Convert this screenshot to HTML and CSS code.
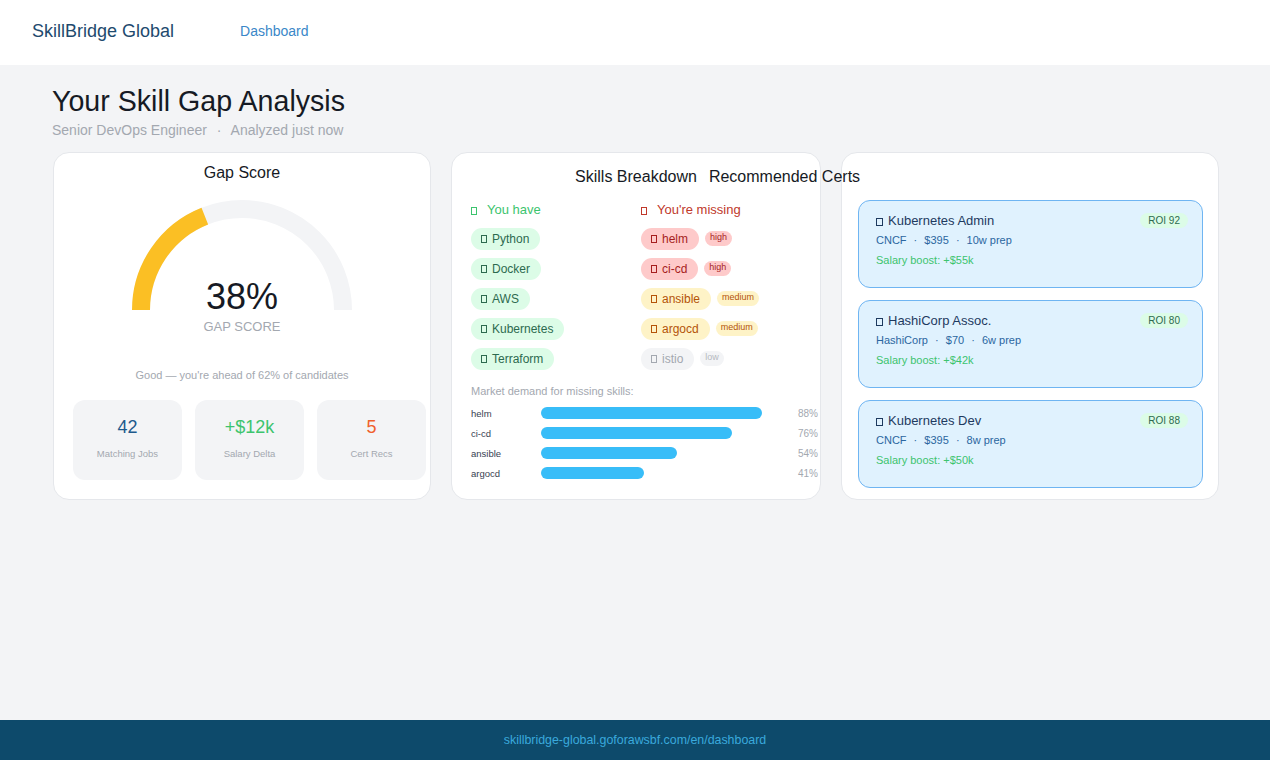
FILE: index.html
```html
<!DOCTYPE html>
<html lang="en">
<head>
  <meta charset="UTF-8">
  <meta name="viewport" content="width=device-width, initial-scale=1.0">
  <title>SkillBridge Global – Dashboard</title>
  <link rel="stylesheet" href="styles.css">
</head>
<body>

<header class="topbar">
  <div class="logo">SkillBridge Global</div>
  <nav class="nav">
    <a href="#" class="nav-link">Dashboard</a>
  </nav>
</header>

<main class="main">
  <h1 class="page-title">Your Skill Gap Analysis</h1>
  <p class="page-sub">Senior DevOps Engineer <span class="dot">·</span> Analyzed just now</p>

  <div class="cards">

    <!-- Gap score -->
    <section class="card">
      <h3 class="card-title">Gap Score</h3>
      <div class="gauge">
        <svg width="240" height="120" viewBox="0 0 240 120">
          <path d="M 19 111 A 101 101 0 0 1 221 111" fill="none" stroke="#f3f4f6" stroke-width="18"/>
          <path d="M 19 111 A 101 101 0 0 1 82.83 17.09" fill="none" stroke="#fbbf24" stroke-width="18"/>
        </svg>
        <div class="gauge-text">
          <div class="gauge-value">38%</div>
          <div class="gauge-label">GAP SCORE</div>
        </div>
      </div>
      <p class="gauge-note">Good — you're ahead of 62% of candidates</p>
      <div class="stats">
        <div class="stat">
          <div class="stat-value blue">42</div>
          <div class="stat-label">Matching Jobs</div>
        </div>
        <div class="stat">
          <div class="stat-value green">+$12k</div>
          <div class="stat-label">Salary Delta</div>
        </div>
        <div class="stat">
          <div class="stat-value orange">5</div>
          <div class="stat-label">Cert Recs</div>
        </div>
      </div>
    </section>

    <!-- Skills breakdown -->
    <section class="card skills-card">
      <h3 class="card-title skills-title"><span class="title-wrap">Skills Breakdown<span class="title-extra">Recommended Certs</span></span></h3>
      <div class="skills">
        <div class="skill-col">
          <div class="col-head have"><span class="tofu"></span>You have</div>
          <div class="skill-row"><span class="pill pill-have"><span class="tofu"></span>Python</span></div>
          <div class="skill-row"><span class="pill pill-have"><span class="tofu"></span>Docker</span></div>
          <div class="skill-row"><span class="pill pill-have"><span class="tofu"></span>AWS</span></div>
          <div class="skill-row"><span class="pill pill-have"><span class="tofu"></span>Kubernetes</span></div>
          <div class="skill-row"><span class="pill pill-have"><span class="tofu"></span>Terraform</span></div>
        </div>
        <div class="skill-col">
          <div class="col-head missing"><span class="tofu"></span>You're missing</div>
          <div class="skill-row"><span class="pill pill-high"><span class="tofu"></span>helm</span><span class="tag tag-high">high</span></div>
          <div class="skill-row"><span class="pill pill-high"><span class="tofu"></span>ci-cd</span><span class="tag tag-high">high</span></div>
          <div class="skill-row"><span class="pill pill-medium"><span class="tofu"></span>ansible</span><span class="tag tag-medium">medium</span></div>
          <div class="skill-row"><span class="pill pill-medium"><span class="tofu"></span>argocd</span><span class="tag tag-medium">medium</span></div>
          <div class="skill-row"><span class="pill pill-low"><span class="tofu"></span>istio</span><span class="tag tag-low">low</span></div>
        </div>
      </div>

      <p class="demand-label">Market demand for missing skills:</p>
      <div class="demand">
        <div class="demand-row">
          <span class="demand-name">helm</span>
          <span class="demand-track"><span class="demand-bar" style="width: 88%"></span></span>
          <span class="demand-pct">88%</span>
        </div>
        <div class="demand-row">
          <span class="demand-name">ci-cd</span>
          <span class="demand-track"><span class="demand-bar" style="width: 76%"></span></span>
          <span class="demand-pct">76%</span>
        </div>
        <div class="demand-row">
          <span class="demand-name">ansible</span>
          <span class="demand-track"><span class="demand-bar" style="width: 54%"></span></span>
          <span class="demand-pct">54%</span>
        </div>
        <div class="demand-row">
          <span class="demand-name">argocd</span>
          <span class="demand-track"><span class="demand-bar" style="width: 41%"></span></span>
          <span class="demand-pct">41%</span>
        </div>
      </div>
    </section>

    <!-- Recommended certs -->
    <section class="card certs-card">
      <div class="cert-list">
        <div class="cert">
          <div class="cert-head">
            <span class="cert-name"><span class="tofu"></span>Kubernetes Admin</span>
            <span class="roi">ROI 92</span>
          </div>
          <div class="cert-meta">CNCF <span class="sep">·</span> $395 <span class="sep">·</span> 10w prep</div>
          <div class="cert-boost">Salary boost: +$55k</div>
        </div>
        <div class="cert">
          <div class="cert-head">
            <span class="cert-name"><span class="tofu"></span>HashiCorp Assoc.</span>
            <span class="roi">ROI 80</span>
          </div>
          <div class="cert-meta">HashiCorp <span class="sep">·</span> $70 <span class="sep">·</span> 6w prep</div>
          <div class="cert-boost">Salary boost: +$42k</div>
        </div>
        <div class="cert">
          <div class="cert-head">
            <span class="cert-name"><span class="tofu"></span>Kubernetes Dev</span>
            <span class="roi">ROI 88</span>
          </div>
          <div class="cert-meta">CNCF <span class="sep">·</span> $395 <span class="sep">·</span> 8w prep</div>
          <div class="cert-boost">Salary boost: +$50k</div>
        </div>
      </div>
    </section>

  </div>
</main>

<footer class="footer">skillbridge-global.goforawsbf.com/en/dashboard</footer>

</body>
</html>
```

FILE: styles.css
```css
* { box-sizing: border-box; }

body {
  margin: 0;
  min-height: 100vh;
  display: flex;
  flex-direction: column;
  font-family: "Liberation Sans", Arial, sans-serif;
  background: #f3f4f6;
  color: #111827;
}

/* top bar */
.topbar {
  height: 65px;
  background: #fff;
  display: flex;
  align-items: center;
  padding: 0 32px;
}
.logo {
  font-size: 18px;
  color: #1e4a6e;
  margin-top: -3px;
}
.nav { margin-left: 66px; margin-top: -3px; }
.nav-link {
  font-size: 14px;
  color: #3a87c8;
  text-decoration: none;
}

/* page */
.main {
  flex: 1;
  padding: 19px 52px;
}
.page-title {
  margin: 0;
  font-size: 28.6px;
  font-weight: normal;
  line-height: 34px;
  color: #161a24;
}
.page-sub {
  margin: 2px 0 0;
  font-size: 14px;
  line-height: 20px;
  color: #a3a8b0;
}
.page-sub .dot { margin: 0 6px; }

.cards {
  margin-top: 12px;
  display: grid;
  grid-template-columns: 378px 370px 378px;
  gap: 20px;
  padding-left: 1px;
}
.card {
  background: #fff;
  border: 1px solid #e5e7eb;
  border-radius: 16px;
  padding: 9px 19px 19px;
  min-width: 0;
}
.card-title {
  margin: 0;
  font-size: 16px;
  font-weight: normal;
  line-height: 22px;
  text-align: center;
  color: #161a24;
}
.skills-card { padding-bottom: 16px; }
.skills-title { padding-top: 4px; }
.title-wrap {
  display: inline-block;
  position: relative;
  z-index: 1;
  white-space: nowrap;
}
.title-extra {
  position: absolute;
  left: calc(100% + 12px);
  top: 0;
}

/* missing-glyph box */
.tofu {
  display: inline-block;
  width: 6px;
  height: 8px;
  border: 1px solid currentColor;
  margin-right: 5px;
  vertical-align: -1px;
}

/* gauge */
.gauge {
  position: relative;
  width: 240px;
  height: 140px;
  margin: 15px auto 0;
}
.gauge svg { display: block; }
.gauge-text {
  position: absolute;
  left: 0;
  right: 0;
  top: 80px;
  text-align: center;
}
.gauge-value {
  font-size: 36px;
  line-height: 36px;
  color: #161a24;
}
.gauge-label {
  margin-top: 4px;
  font-size: 13px;
  line-height: 16px;
  color: #a3a8b0;
}
.gauge-note {
  margin: 28px 0 0;
  text-align: center;
  font-size: 11px;
  line-height: 16px;
  color: #a3a8b0;
}

.stats {
  margin-top: 17px;
  display: grid;
  grid-template-columns: repeat(3, 109px);
  gap: 13px;
}
.stat {
  height: 80px;
  background: #f3f4f6;
  border-radius: 12px;
  padding-top: 16px;
  text-align: center;
}
.stat-value {
  font-size: 18px;
  line-height: 22px;
}
.stat-label {
  margin-top: 10px;
  font-size: 9.5px;
  line-height: 12px;
  color: #a3a8b0;
}
.blue { color: #1e5a8c; }
.green { color: #3cc46e; }
.orange { color: #f0602c; }

/* skills breakdown */
.skills {
  margin-top: 13px;
  display: grid;
  grid-template-columns: 1fr 1fr;
  gap: 10px;
}
.col-head {
  font-size: 13px;
  line-height: 18px;
  margin-bottom: 9px;
}
.col-head .tofu { margin-right: 10px; }
.have { color: #3cc46e; }
.missing { color: #c0392b; }

.skill-row {
  display: flex;
  align-items: center;
  gap: 6px;
  height: 22px;
  margin-bottom: 8px;
}
.skill-row:last-child { margin-bottom: 0; }
.pill {
  display: inline-flex;
  align-items: center;
  height: 22px;
  padding: 0 11px 0 10px;
  border-radius: 11px;
  font-size: 12px;
}
.pill-have { background: #dcfce7; color: #2d6a4f; }
.pill-high { background: #fecaca; color: #a61e1e; }
.pill-medium { background: #fef3c7; color: #b45309; }
.pill-low { background: #f3f4f6; color: #a3a8b0; }

.tag {
  height: 15px;
  padding: 0 5px;
  border-radius: 8px;
  font-size: 9px;
  line-height: 13px;
  margin-top: -2px;
}
.tag-high { background: #fecaca; color: #a61e1e; }
.tag-medium { background: #fef3c7; color: #b45309; }
.tag-low { background: #f3f4f6; color: #b5b9c0; }

.demand-label {
  margin: 14px 0 0;
  font-size: 11px;
  line-height: 14px;
  color: #a3a8b0;
}
.demand {
  margin-top: 5px;
  margin-right: -17px;
}
.demand-row {
  display: grid;
  grid-template-columns: 70px 251px 1fr;
  align-items: center;
  height: 20px;
}
.demand-name {
  font-size: 9.5px;
  color: #374151;
}
.demand-track { display: block; }
.demand-bar {
  display: block;
  height: 12px;
  border-radius: 6px;
  background: #38bdf8;
}
.demand-pct {
  text-align: right;
  font-size: 10px;
  color: #a3a8b0;
}

/* recommended certs */
.certs-card { padding: 9px 15px 11px 16px; }
.cert-list {
  margin-top: 38px;
  display: flex;
  flex-direction: column;
  gap: 12px;
}
.cert {
  height: 88px;
  background: #e0f2fe;
  border: 1px solid #6fb5f2;
  border-radius: 12px;
  padding: 10px 14px 0 17px;
}
.cert-head {
  display: flex;
  justify-content: space-between;
  align-items: center;
  height: 18px;
}
.cert-name {
  font-size: 13px;
  color: #1e3a5f;
}
.cert-name .tofu { width: 7px; margin-right: 5px; }
.roi {
  height: 15px;
  padding: 0 8px;
  border-radius: 8px;
  background: #dcfce7;
  color: #2d6a4f;
  font-size: 10px;
  line-height: 15px;
}
.cert-meta {
  margin-top: 3px;
  font-size: 11px;
  line-height: 16px;
  color: #2b66a0;
}
.cert-meta .sep { margin: 0 4px; }
.cert-boost {
  margin-top: 4px;
  font-size: 11px;
  line-height: 16px;
  color: #3cc46e;
}

/* footer */
.footer {
  height: 40px;
  background: #0d4a6b;
  color: #3aa9dc;
  font-size: 12.4px;
  display: flex;
  align-items: center;
  justify-content: center;
}
```
